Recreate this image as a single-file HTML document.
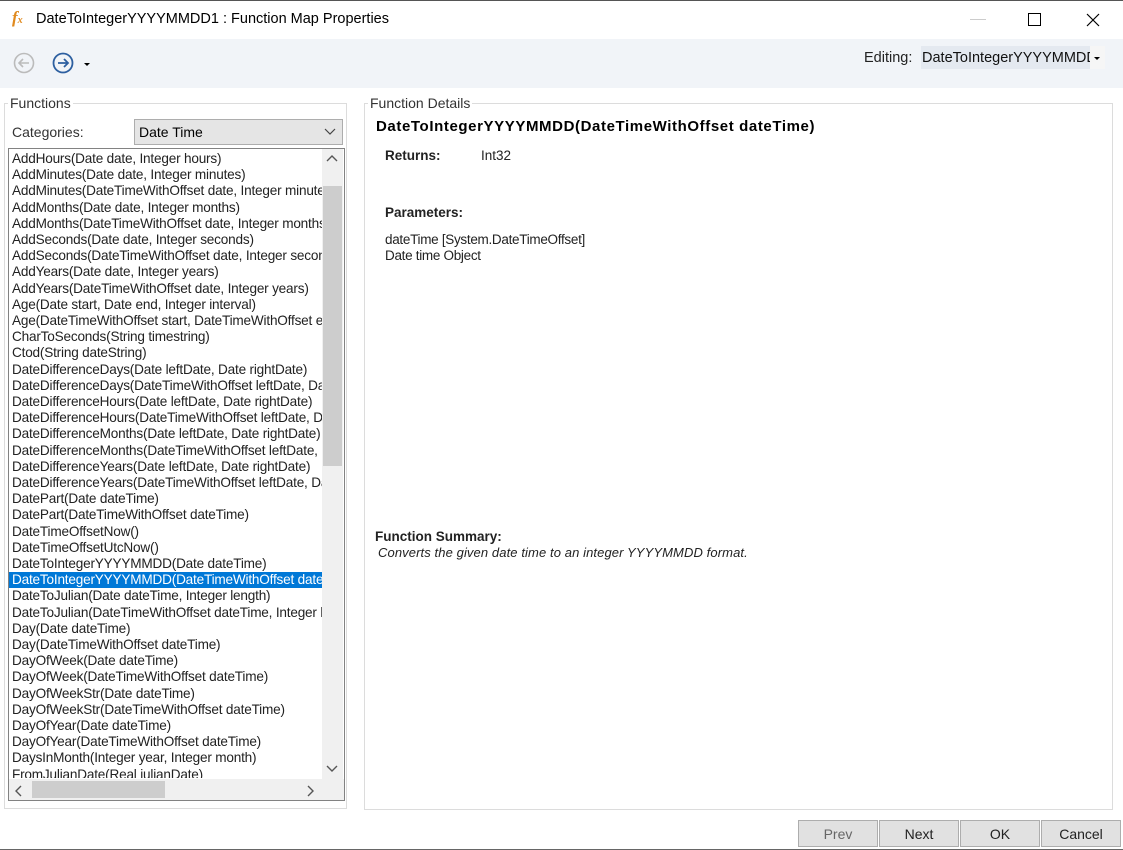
<!DOCTYPE html><html><head><style>
body{margin:0;width:1123px;height:850px;background:#fff;font-family:"Liberation Sans",sans-serif;position:relative;overflow:hidden;font-size:14px;color:#000}
.a{position:absolute}
.li{position:absolute;left:12px;white-space:nowrap;font-size:13.6px;letter-spacing:-0.2px;height:16px;line-height:16px}
.btn{position:absolute;top:820px;height:27px;width:80px;background:#e1e1e1;border:1px solid #adadad;box-sizing:border-box;text-align:center;line-height:26px;font-size:14px;color:#222}
</style></head><body>
<div class="a" style="left:0;top:0;width:1123px;height:1px;background:#555"></div>
<div class="a" style="left:12px;top:8px;color:#e08a1e;font-family:'Liberation Serif';font-style:italic;font-weight:bold;font-size:17px">f<span style="font-size:10px">x</span></div>
<div class="a" style="left:36px;top:11px;font-size:14.5px">DateToIntegerYYYYMMDD1 : Function Map Properties</div>
<div class="a" style="left:970px;top:19px;width:16px;height:1px;background:#ccc"></div>
<div class="a" style="left:1028px;top:13px;width:11px;height:11px;border:1px solid #000"></div>
<svg class="a" style="left:1086px;top:13px" width="14" height="14"><path d="M1 1L13 13M13 1L1 13" stroke="#000" stroke-width="1.2"/></svg>
<div class="a" style="left:0;top:39px;width:1123px;height:49px;background:#f1f4f8"></div>
<svg class="a" style="left:13px;top:52px" width="22" height="22"><circle cx="11" cy="11" r="9.5" fill="none" stroke="#bbb" stroke-width="1.6"/><path d="M16 11H6M10 7L6 11L10 15" fill="none" stroke="#bbb" stroke-width="1.6"/></svg>
<svg class="a" style="left:52px;top:52px" width="22" height="22"><circle cx="11" cy="11" r="9.5" fill="none" stroke="#2d5fa0" stroke-width="1.8"/><path d="M6 11H16M12 7L16 11L12 15" fill="none" stroke="#2d5fa0" stroke-width="1.8"/></svg>
<div class="a" style="left:84px;top:63px;border:3px solid transparent;border-top:3px solid #000"></div>
<div class="a" style="left:864px;top:50px;font-size:14.5px;color:#222">Editing:</div>
<div class="a" style="left:921px;top:46px;width:170px;height:23px;background:#e4e9f0"></div>
<div class="a" style="left:1090px;top:46px;width:15px;height:23px;background:#f6f6f6"></div>
<div class="a" style="left:922px;top:50px;font-size:14.5px;color:#111;width:168px;overflow:hidden;white-space:nowrap">DateToIntegerYYYYMMDD</div>
<div class="a" style="left:1094px;top:57px;border:3px solid transparent;border-top:3px solid #000"></div>

<div class="a" style="left:4px;top:103px;width:343px;height:706px;border:1px solid #dcdcdc;box-sizing:border-box"></div>
<div class="a" style="left:8px;top:95px;background:#fff;padding:0 2px;font-size:14px;color:#333">Functions</div>
<div class="a" style="left:12px;top:124px;font-size:14px;color:#333">Categories:</div>
<div class="a" style="left:134px;top:119px;width:209px;height:26px;background:#e5e5e5;border:1px solid #adadad;box-sizing:border-box"></div>
<div class="a" style="left:139px;top:124px;font-size:14px">Date Time</div>
<svg class="a" style="left:324px;top:128px" width="12" height="8"><path d="M1 1L6 6L11 1" fill="none" stroke="#444" stroke-width="1.2"/></svg>
<div class="a" style="left:8px;top:148px;width:337px;height:653px;border:1px solid #828282;box-sizing:border-box;background:#fff;overflow:hidden">
<div class="a" style="left:313px;top:0;width:21px;height:630px;background:#f0f0f0"></div>
<div class="a" style="left:314px;top:37px;width:19px;height:280px;background:#cdcdcd"></div>
<div class="a" style="left:0;top:630px;width:335px;height:21px;background:#f0f0f0"></div>
<div class="a" style="left:23px;top:632px;width:133px;height:17px;background:#cdcdcd"></div>
<svg class="a" style="left:317px;top:6px" width="12" height="8"><path d="M1 6L6 1L11 6" fill="none" stroke="#555" stroke-width="1.4"/></svg>
<svg class="a" style="left:317px;top:616px" width="12" height="8"><path d="M1 1L6 6L11 1" fill="none" stroke="#555" stroke-width="1.4"/></svg>
<svg class="a" style="left:6px;top:636px" width="8" height="12"><path d="M6 1L1 6L6 11" fill="none" stroke="#555" stroke-width="1.4"/></svg>
<svg class="a" style="left:298px;top:636px" width="8" height="12"><path d="M1 1L6 6L1 11" fill="none" stroke="#555" stroke-width="1.4"/></svg>
</div>
<div class="a" style="left:9px;top:149px;width:313px;height:629px;overflow:hidden">
<div class="a" style="left:0;top:423px;width:313px;height:16px;background:#0078d7"></div>
<div id="L"></div>
</div>

<div class="a" style="left:364px;top:103px;width:749px;height:707px;border:1px solid #dcdcdc;box-sizing:border-box"></div>
<div class="a" style="left:368px;top:95px;background:#fff;padding:0 2px;font-size:14px;color:#333">Function Details</div>
<div class="a" style="left:376px;top:118px;font-weight:bold;font-size:15px;letter-spacing:0.6px">DateToIntegerYYYYMMDD(DateTimeWithOffset dateTime)</div>
<div class="a" style="left:385px;top:148px;font-weight:bold;font-size:13.5px;color:#222">Returns:</div>
<div class="a" style="left:481px;top:148px;font-size:13.5px;color:#222">Int32</div>
<div class="a" style="left:385px;top:205px;font-weight:bold;font-size:13.5px;color:#222">Parameters:</div>
<div class="a" style="left:385px;top:232px;font-size:13.5px;color:#222;letter-spacing:-0.3px;line-height:16px">dateTime [System.DateTimeOffset]<br>Date time Object</div>
<div class="a" style="left:375px;top:529px;font-weight:bold;font-size:13.5px;color:#222">Function Summary:</div>
<div class="a" style="left:378px;top:545px;font-style:italic;font-size:13px;color:#222;letter-spacing:0.1px">Converts the given date time to an integer YYYYMMDD format.</div>

<div class="a" style="left:0;top:849px;width:1123px;height:1px;background:#666"></div>
<div class="btn" style="left:798px;color:#666">Prev</div>
<div class="btn" style="left:879px">Next</div>
<div class="btn" style="left:960px">OK</div>
<div class="btn" style="left:1041px">Cancel</div>
<script>
var t=["AddHours(Date date, Integer hours)","AddMinutes(Date date, Integer minutes)","AddMinutes(DateTimeWithOffset date, Integer minutes)","AddMonths(Date date, Integer months)","AddMonths(DateTimeWithOffset date, Integer months)","AddSeconds(Date date, Integer seconds)","AddSeconds(DateTimeWithOffset date, Integer seconds)","AddYears(Date date, Integer years)","AddYears(DateTimeWithOffset date, Integer years)","Age(Date start, Date end, Integer interval)","Age(DateTimeWithOffset start, DateTimeWithOffset end)","CharToSeconds(String timestring)","Ctod(String dateString)","DateDifferenceDays(Date leftDate, Date rightDate)","DateDifferenceDays(DateTimeWithOffset leftDate, DateTime)","DateDifferenceHours(Date leftDate, Date rightDate)","DateDifferenceHours(DateTimeWithOffset leftDate, DateTime)","DateDifferenceMonths(Date leftDate, Date rightDate)","DateDifferenceMonths(DateTimeWithOffset leftDate, Date)","DateDifferenceYears(Date leftDate, Date rightDate)","DateDifferenceYears(DateTimeWithOffset leftDate, DateTime)","DatePart(Date dateTime)","DatePart(DateTimeWithOffset dateTime)","DateTimeOffsetNow()","DateTimeOffsetUtcNow()","DateToIntegerYYYYMMDD(Date dateTime)","DateToIntegerYYYYMMDD(DateTimeWithOffset dateTime)","DateToJulian(Date dateTime, Integer length)","DateToJulian(DateTimeWithOffset dateTime, Integer length)","Day(Date dateTime)","Day(DateTimeWithOffset dateTime)","DayOfWeek(Date dateTime)","DayOfWeek(DateTimeWithOffset dateTime)","DayOfWeekStr(Date dateTime)","DayOfWeekStr(DateTimeWithOffset dateTime)","DayOfYear(Date dateTime)","DayOfYear(DateTimeWithOffset dateTime)","DaysInMonth(Integer year, Integer month)","FromJulianDate(Real julianDate)"];
var h="";t.forEach(function(s,i){h+='<div class="li" style="left:3px;top:'+(2+i*16.2)+'px;'+(i==26?'color:#fff':'color:#222')+'">'+s+'</div>'});document.getElementById("L").innerHTML=h;
</script>
</body></html>
